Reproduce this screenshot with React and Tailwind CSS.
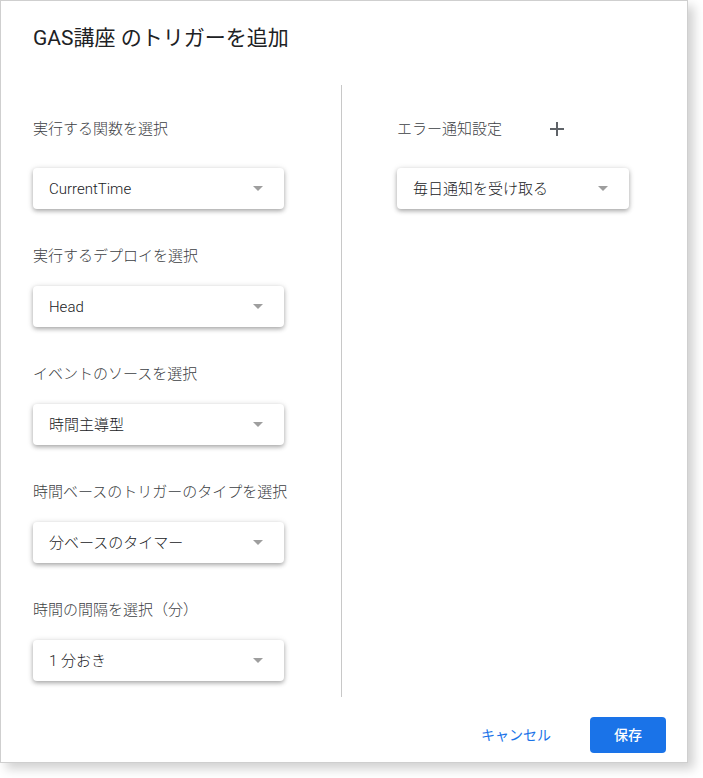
import React from 'react';

const font = { fontFamily: 'Roboto, "Noto Sans CJK JP", sans-serif' };

const Select = ({ value, width = 'w-[251px]' }) => (
  <div className={`${width} h-[41px] flex items-center justify-between pl-4 pr-[21px] bg-white rounded-[4px] shadow-[0_2px_4px_rgba(0,0,0,0.28),0_1px_7px_rgba(0,0,0,0.12)]`}>
    <span className="text-[15px] leading-[20px] h-[20px] font-light text-[#202124]">{value}</span>
    <svg width="10" height="5" viewBox="0 0 10 5"><path d="M0 0h10L5 5z" fill="#9e9e9e" /></svg>
  </div>
);

const Label = ({ children }) => (
  <div className="text-[15px] leading-[20px] h-[20px] font-light text-[#3c4043] whitespace-nowrap">{children}</div>
);

const fields = [
  ['実行するデプロイを選択', 'Head'],
  ['イベントのソースを選択', '時間主導型'],
  ['時間ベースのトリガーのタイプを選択', '分ベースのタイマー'],
  ['時間の間隔を選択（分）', '1 分おき'],
];

export default function App() {
  return (
    <div className="w-[703px] h-[778px] bg-white" style={font}>
      <div className="w-[688px] h-[763px] flex flex-col border border-[#cfcfcf] bg-white shadow-[6px_6px_10px_rgba(0,0,0,0.18)]">
        <h1 className="pl-[32px] pt-[23px] h-[51px] text-[21px] leading-[28px] text-[#202124] font-normal">GAS講座 のトリガーを追加</h1>

        <div className="mt-[33px] h-[612px] flex">
          {/* Left */}
          <div className="w-[340px] pl-[32px] pt-[34px] flex flex-col">
            <Label>実行する関数を選択</Label>
            <div className="mt-[29px]"><Select value="CurrentTime" /></div>
            {fields.map(([l, v]) => (
              <div key={l} className="mt-[37px]">
                <Label>{l}</Label>
                <div className="mt-[20px]"><Select value={v} /></div>
              </div>
            ))}
          </div>

          <div className="w-px bg-[#c8c8c8]" />

          {/* Right */}
          <div className="pl-[55px] pt-[34px] flex flex-col">
            <div className="flex items-center h-[20px]">
              <Label>エラー通知設定</Label>
              <svg className="ml-[48px]" width="14" height="14" viewBox="0 0 14 14">
                <path d="M7 0v14M0 7h14" stroke="#5f6368" strokeWidth="2" />
              </svg>
            </div>
            <div className="mt-[29px]"><Select value="毎日通知を受け取る" width="w-[232px]" /></div>
          </div>
        </div>

        <div className="mt-[20px] flex justify-end items-center pr-[21px]">
          <button className="px-4 h-[36px] text-[14px] text-[#1a73e8] mr-[23px]">キャンセル</button>
          <button className="w-[76px] h-[36px] rounded-[4px] bg-[#1a73e8] text-white text-[14px] font-medium">保存</button>
        </div>
      </div>
    </div>
  );
}
